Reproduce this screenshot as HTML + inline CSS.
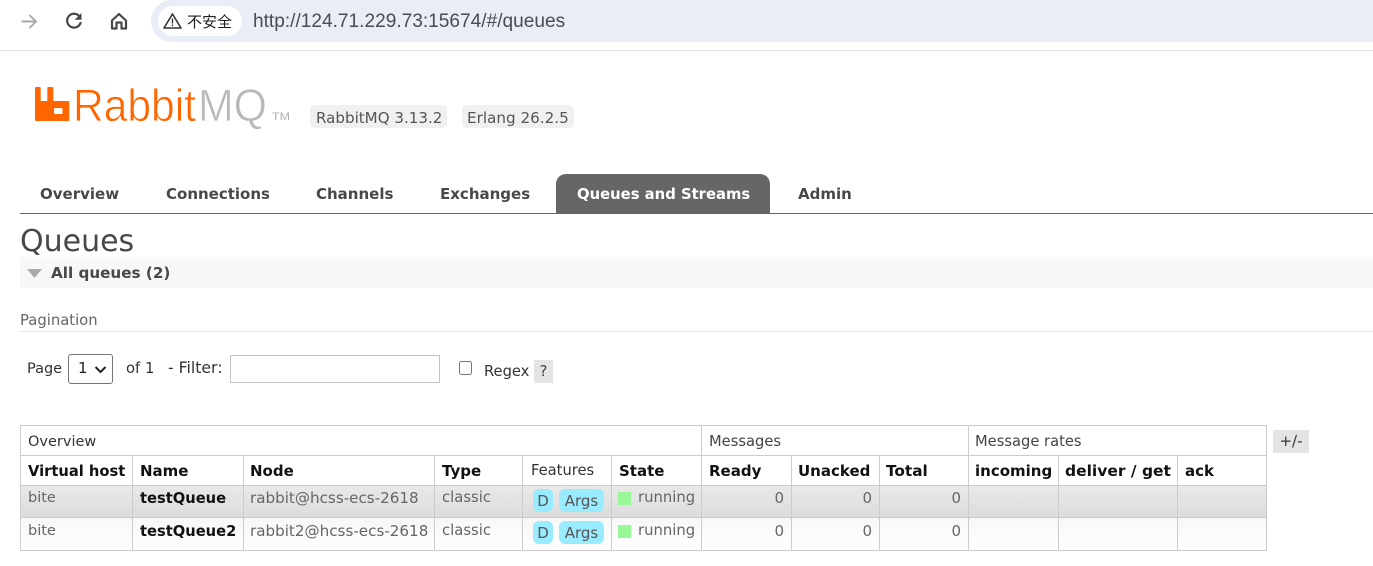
<!DOCTYPE html>
<html><head><meta charset="utf-8">
<style>
html,body{margin:0;padding:0;background:#fff;width:1373px;height:566px;overflow:hidden}
body{position:relative;font-family:"DejaVu Sans","Liberation Sans",sans-serif;font-size:15px;color:#484848}
.a{position:absolute;white-space:nowrap;line-height:20px}
.b{font-weight:bold}
.h{color:#111}
.tab{font-weight:bold;font-size:15px;color:#484848;top:184px}
.l{position:absolute;background:#ccc}
.r{text-align:right;width:60px}
.pill{position:absolute;background:#99ebff;border-radius:6px;color:#555;text-align:center;height:23px}
.sq{position:absolute;width:13px;height:13px;background:#98f898}
</style></head><body>

<!-- browser bar -->
<svg class="a" style="left:0;top:0" width="140" height="44" viewBox="0 0 140 44">
<path d="M21.500 21.500H36M29.500 15l6.500 6.500-6.500 6.500" fill="none" stroke="#a8a8a8" stroke-width="1.900"/>
<path d="M79.600 16.600A6.900 6.900 0 1 0 80.800 22" fill="none" stroke="#474747" stroke-width="2.200"/>
<path d="M81.500 13v6.800h-6.800z" fill="#474747"/>
<path d="M112 20.500L119 14l7 6.500V28.500h-4.500V22.500h-5V28.500H112z" fill="none" stroke="#474747" stroke-width="2.200" stroke-linejoin="round"/>
</svg>
<div style="position:absolute;left:151px;top:0;width:1222px;height:42px;background:#e9edf6;border-radius:21px 0 0 21px"></div>
<div style="position:absolute;left:158px;top:6px;width:84px;height:30px;background:#fff;border-radius:15px"></div>
<svg class="a" style="left:163px;top:12px" width="20" height="18" viewBox="0 0 20 18">
<path d="M9.500 2L18 16H1z" fill="none" stroke="#333" stroke-width="1.600" stroke-linejoin="round"/>
<path d="M9.500 6.500v5M9.500 12.500v1.600" stroke="#333" stroke-width="1.400"/>
</svg>
<div class="a" style="left:187px;top:12px;font-family:'Noto Sans CJK SC','Liberation Sans',sans-serif;font-size:15px;color:#222">不安全</div>
<div class="a" style="left:253px;top:12px;font-family:'Liberation Sans',sans-serif;font-size:19.100px;color:#474c55">http://124.71.229.73:15674/#/queues</div>
<div style="position:absolute;left:0;top:50px;width:1373px;height:1px;background:#e2e2e2"></div>

<!-- logo -->
<svg class="a" style="left:30px;top:80px" width="270" height="50" viewBox="0 0 270 50">
<path fill-rule="evenodd" d="M6 7h3.700a1 1 0 0 1 1 1v13h6.600V8a1 1 0 0 1 1-1h4a1 1 0 0 1 1 1v13h15a1 1 0 0 1 1 1v18a1 1 0 0 1-1 1H6a1 1 0 0 1-1-1V8a1 1 0 0 1 1-1zM25 28h6.500a1 1 0 0 1 1 1v4a1 1 0 0 1-1 1H25a1 1 0 0 1-1-1v-4a1 1 0 0 1 1-1z" fill="#f60"/>
<text x="43" y="41" font-family="Liberation Sans" font-size="45" fill="#f60" stroke="#fff" stroke-width="0.700" textLength="123" lengthAdjust="spacingAndGlyphs">Rabbit</text>
<text x="168" y="41" font-family="Liberation Sans" font-size="45" fill="#b8b8b8" stroke="#fff" stroke-width="0.700" textLength="69" lengthAdjust="spacingAndGlyphs">MQ</text>
<text x="242" y="40" font-family="Liberation Sans" font-size="11" fill="#b0b0b0" textLength="18" lengthAdjust="spacingAndGlyphs">TM</text>
</svg>
<div style="position:absolute;left:310px;top:105px;width:137px;height:23px;background:#f0f0f0;border-radius:5px"></div>
<div class="a" style="left:316px;top:108px;color:#555;font-size:15.100px">RabbitMQ 3.13.2</div>
<div style="position:absolute;left:462px;top:105px;width:112px;height:23px;background:#f0f0f0;border-radius:5px"></div>
<div class="a" style="left:467px;top:108px;color:#555;font-size:15.200px">Erlang 26.2.5</div>

<!-- nav -->
<div class="a tab" style="left:40px">Overview</div>
<div class="a tab" style="left:166px">Connections</div>
<div class="a tab" style="left:316px">Channels</div>
<div class="a tab" style="left:440px">Exchanges</div>
<div style="position:absolute;left:556px;top:174px;width:214px;height:40px;background:#666;border-radius:10px 10px 0 0"></div>
<div class="a tab" style="left:577px;top:185px;color:#fff;font-size:14.800px">Queues and Streams</div>
<div class="a tab" style="left:798px">Admin</div>
<div style="position:absolute;left:20px;top:213px;width:1353px;height:1px;background:#666"></div>

<!-- heading -->
<div class="a" style="left:20px;top:225px;font-size:30px;line-height:34px;color:#484848">Queues</div>
<div style="position:absolute;left:20px;top:257px;width:1353px;height:31px;background:#f8f8f8"></div>
<svg class="a" style="left:26px;top:268px" width="18" height="12"><path d="M1 1h15l-7.500 9z" fill="#aaa"/></svg>
<div class="a b" style="left:51px;top:263px;font-size:15.200px">All queues (2)</div>

<!-- pagination -->
<div class="a" style="left:20px;top:311px;font-size:14.800px;color:#666">Pagination</div>
<div style="position:absolute;left:20px;top:331px;width:1353px;height:1px;background:#e4e4e4"></div>
<div class="a" style="left:27px;top:359px;font-size:14.500px;color:#333">Page</div>
<div style="position:absolute;left:68px;top:354px;width:43px;height:28px;border:1px solid #767676;border-radius:3px;background:#fff"></div>
<div class="a" style="left:78px;top:358px;color:#222">1</div>
<svg class="a" style="left:94px;top:365px" width="14" height="10"><path d="M1.500 2l5 5 5-5" fill="none" stroke="#222" stroke-width="2"/></svg>
<div class="a" style="left:126px;top:359px;font-size:14.800px;color:#333">of 1</div>
<div class="a" style="left:168px;top:358px;font-size:15.700px;color:#333">- Filter:</div>
<div style="position:absolute;left:230px;top:355px;width:208px;height:26px;border:1px solid #c4c4c4;background:#fff"></div>
<div style="position:absolute;left:459px;top:361px;width:11px;height:12px;border:1.500px solid #767676;border-radius:2.500px;background:#fff"></div>
<div class="a" style="left:484px;top:362px;font-size:14.700px;color:#333">Regex</div>
<div class="a" style="left:534px;top:360px;width:19px;height:23px;line-height:23px;background:#e4e4e4;text-align:center;color:#444">?</div>

<!-- table rows -->
<div style="position:absolute;left:20px;top:485px;width:1247px;height:32px;background:linear-gradient(#e9e9e9,#dcdcdc)"></div>
<div style="position:absolute;left:20px;top:517px;width:1247px;height:33px;background:linear-gradient(#f7f7f7,#fff)"></div>

<!-- horizontal lines -->
<div class="l" style="left:20px;top:425px;width:1247px;height:1px"></div>
<div class="l" style="left:20px;top:455px;width:1247px;height:1px"></div>
<div class="l" style="left:20px;top:485px;width:1247px;height:1px"></div>
<div class="l" style="left:20px;top:517px;width:1247px;height:1px"></div>
<div class="l" style="left:20px;top:550px;width:1247px;height:1px"></div>
<!-- vertical lines -->
<div class="l" style="left:20px;top:425px;width:1px;height:126px"></div>
<div class="l" style="left:1266px;top:425px;width:1px;height:126px"></div>
<div class="l" style="left:701px;top:425px;width:1px;height:126px"></div>
<div class="l" style="left:968px;top:425px;width:1px;height:126px"></div>
<div class="l" style="left:132px;top:455px;width:1px;height:95px"></div>
<div class="l" style="left:243px;top:455px;width:1px;height:95px"></div>
<div class="l" style="left:434px;top:455px;width:1px;height:95px"></div>
<div class="l" style="left:522px;top:455px;width:1px;height:95px"></div>
<div class="l" style="left:611px;top:455px;width:1px;height:95px"></div>
<div class="l" style="left:791px;top:455px;width:1px;height:95px"></div>
<div class="l" style="left:879px;top:455px;width:1px;height:95px"></div>
<div class="l" style="left:1058px;top:455px;width:1px;height:95px"></div>
<div class="l" style="left:1177px;top:455px;width:1px;height:95px"></div>

<!-- group header -->
<div class="a" style="left:28px;top:432px;font-size:14.500px;color:#333">Overview</div>
<div class="a" style="left:709px;top:432px;font-size:14.700px;color:#444">Messages</div>
<div class="a" style="left:975px;top:432px;font-size:14.700px;color:#444">Message rates</div>
<div class="a" style="left:1273px;top:430px;width:36px;height:23px;line-height:23px;background:#e4e4e4;text-align:center;color:#333">+/-</div>

<!-- column header -->
<div class="a b h" style="left:28px;top:462px;font-size:14.700px">Virtual host</div>
<div class="a b h" style="left:140px;top:461px">Name</div>
<div class="a b h" style="left:250px;top:461px">Node</div>
<div class="a b h" style="left:442px;top:461px">Type</div>
<div class="a" style="left:531px;top:461px;font-size:14.700px;color:#333">Features</div>
<div class="a b h" style="left:619px;top:461px">State</div>
<div class="a b h" style="left:709px;top:461px">Ready</div>
<div class="a b h" style="left:798px;top:461px">Unacked</div>
<div class="a b h" style="left:886px;top:461px;font-size:15.300px">Total</div>
<div class="a b h" style="left:975px;top:461px">incoming</div>
<div class="a b h" style="left:1065px;top:461px;font-size:15.500px">deliver / get</div>
<div class="a b h" style="left:1185px;top:461px">ack</div>

<!-- row 1 -->
<div class="a" style="left:28px;top:488px;font-size:14.500px;color:#666">bite</div>
<div class="a b h" style="left:140px;top:489px;font-size:14.700px">testQueue</div>
<div class="a" style="left:250px;top:488px;color:#666;font-size:15.150px">rabbit@hcss-ecs-2618</div>
<div class="a" style="left:442px;top:488px;font-size:14.800px;color:#666">classic</div>
<div class="pill" style="left:533px;top:489px;width:20px;line-height:24px">D</div>
<div class="pill" style="left:559px;top:489px;width:45px;line-height:24px">Args</div>
<div class="sq" style="left:618px;top:492px"></div>
<div class="a" style="left:638px;top:488px;color:#666;font-size:14.800px">running</div>
<div class="a r" style="left:724px;top:488px;color:#666">0</div>
<div class="a r" style="left:812px;top:488px;color:#666">0</div>
<div class="a r" style="left:901px;top:488px;color:#666">0</div>

<!-- row 2 -->
<div class="a" style="left:28px;top:521px;font-size:14.500px;color:#666">bite</div>
<div class="a b h" style="left:140px;top:522px;font-size:14.700px">testQueue2</div>
<div class="a" style="left:250px;top:521px;color:#666;font-size:15.150px">rabbit2@hcss-ecs-2618</div>
<div class="a" style="left:442px;top:521px;font-size:14.800px;color:#666">classic</div>
<div class="pill" style="left:533px;top:521px;width:20px;line-height:24px">D</div>
<div class="pill" style="left:559px;top:521px;width:45px;line-height:24px">Args</div>
<div class="sq" style="left:618px;top:525px"></div>
<div class="a" style="left:638px;top:521px;color:#666;font-size:14.800px">running</div>
<div class="a r" style="left:724px;top:521px;color:#666">0</div>
<div class="a r" style="left:812px;top:521px;color:#666">0</div>
<div class="a r" style="left:901px;top:521px;color:#666">0</div>
</body></html>
